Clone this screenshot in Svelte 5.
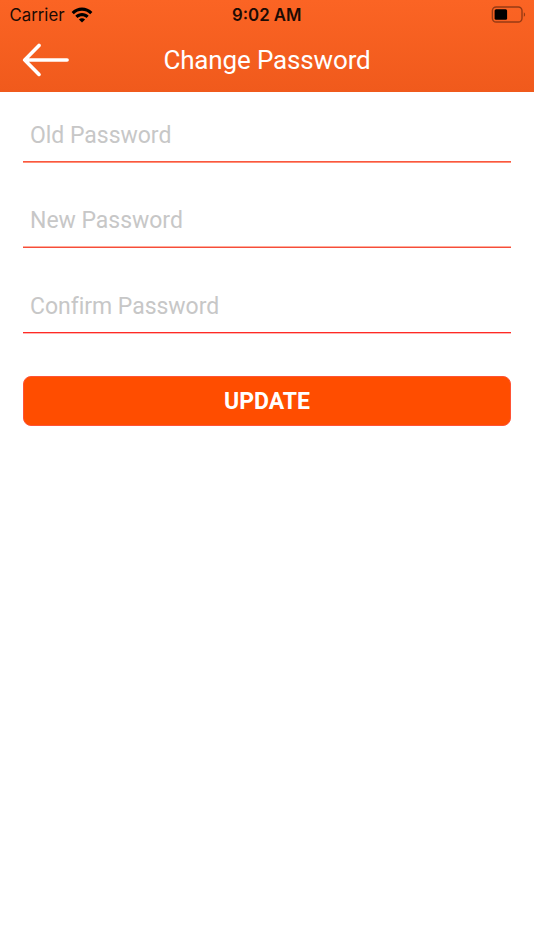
<script lang="ts">
  let fields = $state([
    { id: 'old', label: 'Old Password', value: '' },
    { id: 'new', label: 'New Password', value: '' },
    { id: 'confirm', label: 'Confirm Password', value: '' }
  ]);

  function update(event: SubmitEvent) {
    event.preventDefault();
  }
</script>

<div class="screen">
  <header>
    <div class="status-bar">
      <div class="carrier">
        <span>Carrier</span>
        <svg class="wifi" width="22" height="16" viewBox="0 0 22 16" fill="#000">
          <path d="M.6 5C6.2-1 15.8-1 21.4 5l-2.2 2.3c-4.5-4.6-11.9-4.6-16.4 0Z" />
          <path d="M4.3 8.8c3.7-3.8 9.7-3.8 13.4 0l-2.2 2.2c-2.5-2.5-6.5-2.5-9 0Z" />
          <path d="M11 15.5 7.9 12.4c1.7-1.7 4.5-1.7 6.2 0Z" />
        </svg>
      </div>
      <span class="time">9:02 AM</span>
      <svg class="battery" width="35" height="17" viewBox="0 0 35 17">
        <rect x="1.4" y="1" width="29.6" height="15" rx="3.8" fill="none" stroke="#963b14" stroke-width="1.4" />
        <rect x="3.6" y="3.2" width="12.5" height="10.6" rx="1.5" fill="#000" />
        <path d="M32.8 6.2c1.8.8 1.8 3.8 0 4.6Z" fill="#963b14" />
      </svg>
    </div>
    <div class="nav-bar">
      <button class="back" aria-label="Back">
        <svg width="48" height="34" viewBox="0 0 48 34" fill="none" stroke="#fff" stroke-width="3.6" stroke-linecap="round" stroke-linejoin="round">
          <path d="M17 2.4 2.7 17 17 31.4M2.7 17h42.4" />
        </svg>
      </button>
      <h1>Change Password</h1>
    </div>
  </header>

  <form onsubmit={update}>
    {#each fields as field (field.id)}
      <input
        class={field.id}
        type="password"
        placeholder={field.label}
        aria-label={field.label}
        bind:value={field.value}
      />
    {/each}
    <button class="update-btn" type="submit">UPDATE</button>
  </form>
</div>

<style>
  :global(body) {
    background: #fff;
  }

  .screen {
    min-height: 950px;
    background: #fff;
    font-family: Roboto, sans-serif;
  }

  header {
    height: 92px;
    box-sizing: border-box;
    background: linear-gradient(#fb6424, #f05a1c);
  }

  .status-bar {
    display: grid;
    grid-template-columns: 1fr auto 1fr;
    align-items: center;
    height: 30px;
    padding: 0 8px 0 9.5px;
    font-family: Inter, sans-serif;
    font-size: 16.8px;
    color: #1c0b04;
  }

  .carrier {
    display: flex;
    align-items: center;
    gap: 6px;
  }

  .wifi {
    margin-top: -1px;
  }

  .time {
    margin-right: 2px;
    font-weight: 600;
  }

  .battery {
    justify-self: end;
    margin-top: -1px;
  }

  .nav-bar {
    display: grid;
    grid-template-columns: 1fr auto 1fr;
    align-items: center;
    height: 60px;
    padding: 0 22px;
  }

  .back {
    justify-self: start;
    padding: 0;
    border: none;
    background: none;
    cursor: pointer;
  }

  .back svg {
    display: block;
  }

  h1 {
    margin: 0;
    font-size: 26px;
    font-weight: 400;
    letter-spacing: -0.15px;
    color: #fff;
  }

  form {
    display: flex;
    flex-direction: column;
    padding: 15px 23px 0;
  }

  input {
    height: 55px;
    margin-bottom: 31px;
    padding: 2px 7px 0;
    box-sizing: border-box;
    border: none;
    border-bottom: 1px solid #f9573f;
    border-radius: 0;
    outline: none;
    background: none;
    box-shadow: 0 1px #ff8f78;
    font-family: inherit;
    font-size: 23px;
    letter-spacing: -0.03px;
    color: #333;
  }

  input.new {
    margin-bottom: 30px;
    padding-top: 1px;
    box-shadow: inset 0 -1px #ffab98;
    border-bottom-color: #f54c3c;
  }

  input.confirm {
    margin-bottom: 43px;
    box-shadow: 0 1px #ffb5b0;
    border-bottom-color: #ff2a26;
  }

  input::placeholder {
    color: #c7c7c7;
    opacity: 1;
  }

  .update-btn {
    height: 50px;
    padding: 1px 6px 0;
    border: 1px solid #ff5335;
    border-radius: 8px;
    background: #ff4d00;
    font-family: inherit;
    font-size: 23px;
    font-weight: 700;
    color: #fff;
    cursor: pointer;
  }
</style>
